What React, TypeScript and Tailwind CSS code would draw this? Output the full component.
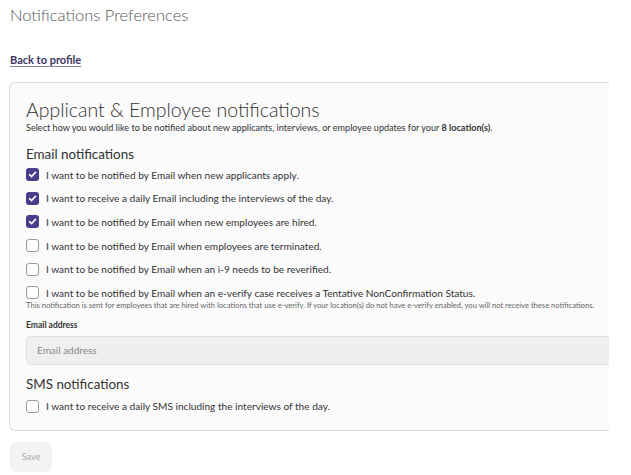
import { useState } from 'react'

const emailOptions = [
  { id: 'new-applicants', label: 'I want to be notified by Email when new applicants apply.', checked: true },
  { id: 'daily-interviews', label: 'I want to receive a daily Email including the interviews of the day.', checked: true },
  { id: 'new-employees', label: 'I want to be notified by Email when new employees are hired.', checked: true },
  { id: 'terminated', label: 'I want to be notified by Email when employees are terminated.', checked: false },
  { id: 'i9', label: 'I want to be notified by Email when an i-9 needs to be reverified.', checked: false },
  { id: 'everify', label: 'I want to be notified by Email when an e-verify case receives a Tentative NonConfirmation Status.', checked: false },
]

function Checkbox({ checked, onChange }: { checked: boolean; onChange: () => void }) {
  return (
    <button
      type="button"
      onClick={onChange}
      className={
        checked
          ? 'w-[13px] h-[13px] shrink-0 rounded-[3px] bg-[#4a3b8c] flex items-center justify-center'
          : 'w-[13px] h-[13px] shrink-0 rounded-[3px] border border-[#9a9a9a] bg-white'
      }
    >
      {checked && (
        <svg width="9" height="9" viewBox="0 0 10 10" fill="none">
          <path d="M1.8 5.2 L4 7.3 L8.3 2.6" stroke="white" strokeWidth="1.8" strokeLinecap="round" strokeLinejoin="round" />
        </svg>
      )}
    </button>
  )
}

export default function App() {
  const [email, setEmail] = useState<Record<string, boolean>>(
    Object.fromEntries(emailOptions.map((o) => [o.id, o.checked]))
  )
  const [sms, setSms] = useState(false)
  const [address, setAddress] = useState('')

  return (
    <div className="w-[631px] h-[475px] overflow-hidden bg-white px-[10px] font-['Lato','Liberation_Sans',sans-serif] text-[#333]">
      <h1 className="pt-[3px] h-[27px] text-[16.5px] leading-[24px] font-light text-[#555]">Notifications Preferences</h1>

      <div className="mt-[27px] h-[28px] text-[11px] leading-[12px]">
        <a href="#" className="font-bold text-[#3d3566] underline underline-offset-2 decoration-[#8a85a8]">
          Back to profile
        </a>
      </div>

      <div className="w-[600px] -ml-px border border-r-0 border-[#dcdcdc] rounded-l-[6px] bg-[#fbfbfb] pl-[16px] pt-[14px] pb-[12px]">
        <h2 className="text-[19.5px] leading-[25px] font-light text-[#333]">Applicant &amp; Employee notifications</h2>
        <p className="text-[9.1px] leading-[11px] text-[#333]">
          Select how you would like to be notified about new applicants, interviews, or employee updates for your <b>8 location(s)</b>.
        </p>

        <h3 className="mt-[13px] text-[13.4px] leading-[16px] text-[#333]">Email notifications</h3>
        <div className="mt-[1px]">
          {emailOptions.map((o) => (
            <label key={o.id} className="flex items-center gap-[7px] h-[23.6px] cursor-pointer">
              <Checkbox checked={email[o.id]} onChange={() => setEmail({ ...email, [o.id]: !email[o.id] })} />
              <span className="text-[10.1px] leading-[12px] text-[#333]">{o.label}</span>
            </label>
          ))}
        </div>
        <p className="-mt-[4px] text-[7.6px] leading-[9px] text-[#666]">
          This notification is sent for employees that are hired with locations that use e-verify. If your location(s) do not have e-verify enabled, you will not receive these notifications.
        </p>

        <label className="block mt-[10px] text-[8.5px] leading-[10px] font-bold text-[#333]">Email address</label>
        <input
          value={address}
          onChange={(e) => setAddress(e.target.value)}
          placeholder="Email address"
          className="mt-[6px] block w-full h-[29px] rounded-l-[5px] border border-r-0 border-[#dedede] bg-[#efefef] px-[10px] text-[10px] text-[#555] placeholder:text-[#888] outline-none"
        />

        <h3 className="mt-[11px] text-[13.4px] leading-[16px] text-[#333]">SMS notifications</h3>
        <label className="flex items-center gap-[7px] h-[23px] mt-[3px] cursor-pointer">
          <Checkbox checked={sms} onChange={() => setSms(!sms)} />
          <span className="text-[10.1px] leading-[12px] text-[#333]">I want to receive a daily SMS including the interviews of the day.</span>
        </label>
      </div>

      <button
        type="button"
        disabled
        className="mt-[11px] w-[42px] h-[30px] rounded-[6px] bg-[#f3f3f3] text-[9px] text-[#aaa]"
      >
        Save
      </button>
    </div>
  )
}
